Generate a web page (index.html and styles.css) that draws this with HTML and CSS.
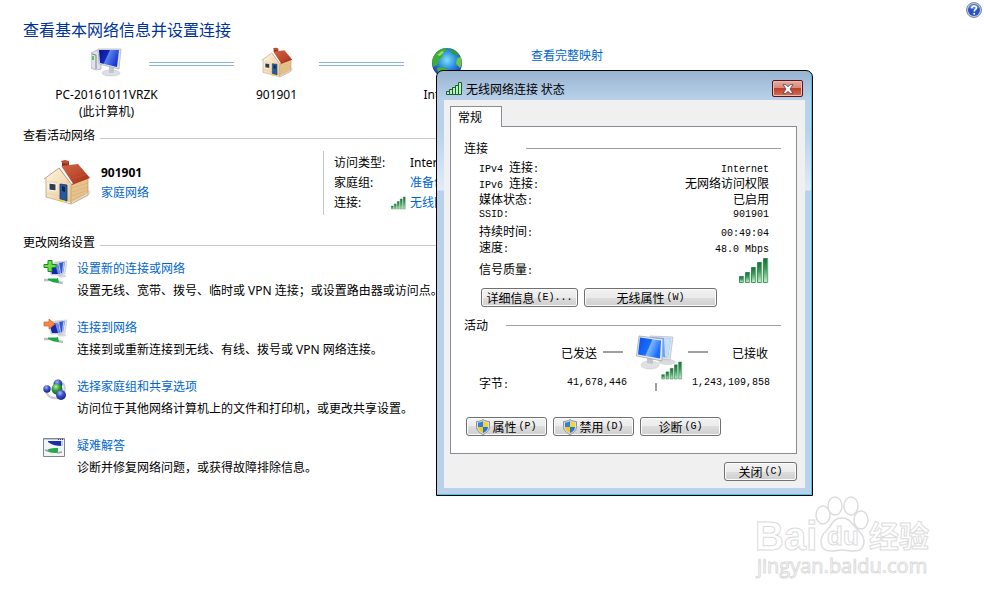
FILE: index.html
```html
<!DOCTYPE html>
<html lang="zh-CN">
<head>
    <meta charset="UTF-8">
    <meta name="viewport" content="width=device-width, initial-scale=1.0">
    <title>网络和共享中心</title>
    <link rel="stylesheet" href="styles.css">
</head>
<body>
    <!-- shared icons -->
    <svg class="sprite" width="0" height="0" aria-hidden="true">
        <defs>
            <linearGradient id="roof" x1="0" y1="0" x2="1" y2="1">
                <stop offset="0" stop-color="#d8694a"/>
                <stop offset="1" stop-color="#a22c12"/>
            </linearGradient>
            <linearGradient id="wall" x1="0" y1="0" x2="1" y2="1">
                <stop offset="0" stop-color="#fff6e2"/>
                <stop offset="1" stop-color="#e9c692"/>
            </linearGradient>
            <linearGradient id="screen" x1="0" y1="0" x2="1" y2="0.4">
                <stop offset="0" stop-color="#0a128c"/>
                <stop offset="0.45" stop-color="#1426b8"/>
                <stop offset="0.5" stop-color="#5b86ea"/>
                <stop offset="1" stop-color="#1a35d8"/>
            </linearGradient>
            <linearGradient id="bright" x1="0" y1="0" x2="1" y2="0.4">
                <stop offset="0" stop-color="#0a50e8"/>
                <stop offset="0.55" stop-color="#1a6cff"/>
                <stop offset="0.6" stop-color="#7fb8ff"/>
                <stop offset="1" stop-color="#1a6cff"/>
            </linearGradient>
            <linearGradient id="bar" x1="0" y1="0" x2="0" y2="1">
                <stop offset="0" stop-color="#1c7038"/>
                <stop offset="0.4" stop-color="#3a9458"/>
                <stop offset="1" stop-color="#c4f2cc"/>
            </linearGradient>
            <radialGradient id="sea" cx="0.5" cy="0.4" r="0.65">
                <stop offset="0" stop-color="#7fe0fa"/>
                <stop offset="0.45" stop-color="#2f8fe0"/>
                <stop offset="1" stop-color="#14259c"/>
            </radialGradient>
            <radialGradient id="blueBall" cx="0.4" cy="0.3" r="0.7">
                <stop offset="0" stop-color="#a9b8f5"/>
                <stop offset="0.5" stop-color="#3a4fc4"/>
                <stop offset="1" stop-color="#1a2580"/>
            </radialGradient>
            <radialGradient id="greenBall" cx="0.4" cy="0.3" r="0.7">
                <stop offset="0" stop-color="#b4f0a8"/>
                <stop offset="0.5" stop-color="#2f9c3a"/>
                <stop offset="1" stop-color="#126020"/>
            </radialGradient>
        </defs>
        <symbol id="house" viewBox="0 0 48 48">
            <path d="M44 30l4 3-3 4-17 9z" fill="#cfcfcf" opacity="0.6"/>
            <path d="M19 4l3-2 4 1v9l-7-1z" fill="#8f3018"/>
            <path d="M18 2l4-1 4 1-1 3-6-1z" fill="#b2543a"/>
            <path d="M3 18L17 9l12 15v20L3 38z" fill="url(#wall)"/>
            <path d="M28 24l17-5v15L28 44z" fill="#e6c38d"/>
            <path d="M29 29l16-5M29 33l16-5M29 37l16-6M29 41l13-6" stroke="#d5ae76" stroke-width="0.7"/>
            <path d="M4 23h10M4 34l24 6M22 23l6 1" stroke="#e2c79b" stroke-width="0.6"/>
            <path d="M18 7l17-2 12 14-18 7z" fill="url(#roof)"/>
            <path d="M22 8l14 0M24 12l14-2M27 16l14-4M28 20l16-5" stroke="#c0563a" stroke-width="0.7"/>
            <path d="M1 19L17 7l12 18" fill="none" stroke="#fff" stroke-width="2.2"/>
            <path d="M1 20L16 9l13 17" fill="none" stroke="#9d7754" stroke-width="0.7"/>
            <path d="M3 19v19l25 7V26M28 45l17-9V20" fill="none" stroke="#b8966a" stroke-width="0.7"/>
            <path d="M6 24l7 1v7l-7-1z" fill="#333c48" stroke="#fff" stroke-width="1"/>
            <path d="M17 25l7 1v16l-7-2z" fill="#245b9e" stroke="#14386c" stroke-width="0.8"/>
            <path d="M19 27l3 1v5l-3-1z" fill="#10254a"/>
            <path d="M16 40l7 2-4 1-3-1z" fill="#eed038"/>
        </symbol>
        <symbol id="signal" viewBox="0 0 30 27">
            <g fill="url(#bar)" stroke="#1f7a40" stroke-width="0.8">
                <path d="M0.5 19.5h4v6h-4z"/>
                <path d="M6.5 15.5h4v10h-4z"/>
                <path d="M12.5 10.5h4v15h-4z"/>
                <path d="M18.5 5.5h4v20h-4z"/>
                <path d="M24.5 1.5h4v24h-4z"/>
            </g>
            <path d="M5 26V20M11 26V16M17 26V11M23 26V6M29 26V2" stroke="#b6dcc0" stroke-width="0.8"/>
        </symbol>
        <symbol id="shield" viewBox="0 0 14 16">
            <path d="M7 0.5c2 1.500 4 2 6.500 2v5c0 4-3 6.500-6.500 8C3.500 14 0.500 11.500 0.500 7.500v-5C3 2.500 5 2 7 0.500z" fill="#d9dde2" stroke="#8b929b"/>
            <path d="M7 2C5.500 3 4 3.500 2 3.600V8h5z" fill="#2b82d9"/>
            <path d="M7 2c1.500 1 3 1.500 5 1.600V8H7z" fill="#f9d331"/>
            <path d="M2 8h5v6C4 12.700 2.200 11 2 8z" fill="#f6c81f"/>
            <path d="M12 8H7v6c3-1.300 4.800-3 5-6z" fill="#2676cf"/>
        </symbol>
        <symbol id="netpc" viewBox="0 0 24 24">
            <ellipse cx="19" cy="16" rx="4" ry="1.500" fill="#d6d8dc"/>
            <path d="M12 2l12-1-2 13-8 1z" fill="#dfe3ea" stroke="#b4bac4" stroke-width="0.5"/>
            <path d="M15 3l7-1-2 11-5 1z" fill="#3454d2"/>
            <path d="M20 3l2-1-2 11h-1z" fill="#a9c2f4"/>
            <path d="M5 3l11 0 2 12-10 0z" fill="#d5dae4" stroke="#a5acba" stroke-width="0.5"/>
            <path d="M6 4l9 0 2 10-8 0z" fill="#1526ac"/>
            <path d="M12 4h3l2 10h-2z" fill="#6d90ec"/>
            <path d="M1 20l5 0M14 22l6 1" stroke="#b9bfc4" stroke-width="2.500"/>
            <path d="M5 18l10 0 1 5c-4 0-8-1-11-3z" fill="#1fa548"/>
            <path d="M5 18.500l9 0" stroke="#7fdc9a"/>
        </symbol>
    </svg>

    <main class="page">
        <header class="page-header">
            <h1 class="page-title">查看基本网络信息并设置连接</h1>
            <button class="help" type="button" aria-label="帮助">
                <svg width="16" height="16" viewBox="0 0 16 16">
                    <circle cx="8" cy="8" r="7.500" fill="#c3c9d8" stroke="#7f8aa5"/>
                    <circle cx="8" cy="8" r="6" fill="#2a52c4"/>
                    <path d="M3 6a5.200 5.200 0 0 1 10 0c-3 1.500-7 1.500-10 0z" fill="#5f86e0"/>
                    <path d="M5.800 6.200c0-3 4.600-2.900 4.600-0.300 0 1.700-2.200 1.700-2.200 3.500" fill="none" stroke="#fff" stroke-width="1.600"/>
                    <circle cx="8.200" cy="11.700" r="1" fill="#fff"/>
                </svg>
            </button>
        </header>

        <section class="network-map">
            <div class="node">
                <svg width="32" height="32" viewBox="0 0 32 32">
                    <path d="M0 6l6-3 4 1v18l-5 1-5-2z" fill="#dfe2e6" stroke="#a6abb3" stroke-width="0.700"/>
                    <path d="M1 7l4 1v14" fill="none" stroke="#80858d"/>
                    <path d="M2 9v4" stroke="#35c135" stroke-width="1.600"/>
                    <ellipse cx="20" cy="26" rx="9" ry="3" fill="#dcdfe3" stroke="#c0c4c9" stroke-width="0.600"/>
                    <path d="M18 19l5 1v6h-5z" fill="#c3c6cc"/>
                    <path d="M7 2l23 0-2 20L8 17z" fill="#dde2e9" stroke="#a9afb8" stroke-width="0.700"/>
                    <path d="M8 3l20 0-2 17L9 16z" fill="url(#screen)"/>
                </svg>
                <span>PC-20161011VRZK</span>
                <span>(此计算机)</span>
            </div>
            <div class="link-line"></div>
            <div class="node">
                <svg width="32" height="32"><use href="#house"/></svg>
                <span>901901</span>
            </div>
            <div class="link-line"></div>
            <div class="node">
                <svg width="32" height="32" viewBox="0 0 32 32">
                    <circle cx="16" cy="16" r="15" fill="url(#sea)"/>
                    <path d="M2 11c2-5 6-9 12-10l2 3-5 2 1 3-4 4-2 5-4 2c-1-4-1-6 0-9z" fill="#3fae30"/>
                    <path d="M6 8l5-4 2 1-4 4z" fill="#93de6a"/>
                    <path d="M19 1.500c4 1 7 3 9 6l-4 1-4-3z" fill="#2f9c38"/>
                    <path d="M30 10c1 4 1 8-1 11l-4-4 1-6z" fill="#6cc545"/>
                    <path d="M6 21l7-1 5 4-3 6.500c-5-1-8-4-9-9z" fill="#46b02f"/>
                </svg>
                <span>Internet</span>
            </div>
            <a class="full-map" href="#">查看完整映射</a>
        </section>

        <h2 class="section-title">查看活动网络</h2>
        <section class="active-network">
            <div class="network-name">
                <svg width="48" height="48"><use href="#house"/></svg>
                <div>
                    <strong>901901</strong>
                    <a href="#">家庭网络</a>
                </div>
            </div>
            <dl class="network-info">
                <dt>访问类型:</dt>
                <dd>Internet</dd>
                <dt>家庭组:</dt>
                <dd><a href="#">准备创建</a></dd>
                <dt>连接:</dt>
                <dd class="with-signal">
                    <svg width="15" height="14"><use href="#signal"/></svg>
                    <a href="#">无线网络连接</a>
                </dd>
            </dl>
        </section>

        <h2 class="section-title">更改网络设置</h2>
        <ul class="tasks">
            <li class="task">
                <svg width="24" height="24" viewBox="0 0 24 24">
                    <use href="#netpc"/>
                    <path d="M5 0.500h4v4h4v3H9v4H5v-4H1v-3h4z" fill="#6fdc50" stroke="#188a1c"/>
                </svg>
                <div>
                    <a href="#">设置新的连接或网络</a>
                    <p>设置无线、宽带、拨号、临时或 VPN 连接；或设置路由器或访问点。</p>
                </div>
            </li>
            <li class="task">
                <svg width="24" height="24" viewBox="0 0 24 24">
                    <use href="#netpc"/>
                    <path d="M1 3h5V0l6 5-6 5V7H1z" fill="#f58a48" stroke="#d2602a" stroke-width="0.700"/>
                </svg>
                <div>
                    <a href="#">连接到网络</a>
                    <p>连接到或重新连接到无线、有线、拨号或 VPN 网络连接。</p>
                </div>
            </li>
            <li class="task">
                <svg width="24" height="24" viewBox="0 0 24 24">
                    <path d="M3 14c3 6 8 7 13 6M20 5c2 3 2 6 1 9" fill="none" stroke="#c6cbd6" stroke-width="2"/>
                    <circle cx="15" cy="6" r="4.500" fill="url(#blueBall)"/>
                    <circle cx="4" cy="11" r="3.700" fill="url(#blueBall)"/>
                    <circle cx="14" cy="11" r="5.500" fill="url(#greenBall)"/>
                    <circle cx="18" cy="17" r="5" fill="url(#blueBall)"/>
                </svg>
                <div>
                    <a href="#">选择家庭组和共享选项</a>
                    <p>访问位于其他网络计算机上的文件和打印机，或更改共享设置。</p>
                </div>
            </li>
            <li class="task">
                <svg width="24" height="24" viewBox="0 0 24 24">
                    <path d="M0.500 1.500h21v18h-21z" fill="#f1f3f5" stroke="#7e858e"/>
                    <path d="M1 2.500h20" stroke="#c3c9d2"/>
                    <path d="M15 2.500h1m1 0h1m1 0h1" stroke="#444"/>
                    <path d="M5 4h14v5c-5 0-10-1-14-4z" fill="#1b2fa6"/>
                    <path d="M19 4v5" stroke="#bcd0f0" stroke-width="2"/>
                    <path d="M4 13c4-2 7-2 11-2v5c-4 0-8 0-11-2z" fill="#27a84b"/>
                    <path d="M2 13l3 1M14 16l5-1" stroke="#9aa2aa" stroke-width="1.500"/>
                </svg>
                <div>
                    <a href="#">疑难解答</a>
                    <p>诊断并修复网络问题，或获得故障排除信息。</p>
                </div>
            </li>
        </ul>
    </main>

    <div class="dialog" role="dialog" aria-labelledby="dialogTitle">
        <div class="title-bar">
            <svg width="16" height="13" viewBox="0 0 16 13">
                <path d="M0.500 9.500h3v3h-3zM3.500 7.500h3v5h-3zM6.500 5.500h3v7h-3zM9.500 3.500h3v9h-3zM12.500 0.500h3v12h-3z" fill="#b4f5b8" stroke="#1d5c33"/>
            </svg>
            <span class="dialog-title" id="dialogTitle">无线网络连接 状态</span>
            <button class="close-x" type="button" aria-label="关闭">
                <svg width="12" height="10" viewBox="0 0 12 10">
                    <path d="M1 0.700h3l2 2 2-2h3L8 5l3 4.300H8l-2-2-2 2H1L4 5z" fill="#fff" stroke="#5b4a52" stroke-width="0.900"/>
                </svg>
            </button>
        </div>
        <div class="dialog-body">
            <div role="tablist">
                <button class="tab" type="button" role="tab" aria-selected="true">常规</button>
            </div>
            <div class="panel" role="tabpanel">
                <h3 class="group-title connection-title">连接</h3>
                <dl class="details">
                    <div><dt><span class="en">IPv4 </span>连接<span class="en">:</span></dt><dd class="en">Internet</dd></div>
                    <div><dt><span class="en">IPv6 </span>连接<span class="en">:</span></dt><dd>无网络访问权限</dd></div>
                    <div><dt>媒体状态<span class="en">:</span></dt><dd>已启用</dd></div>
                    <div><dt class="en">SSID:</dt><dd class="en">901901</dd></div>
                    <div><dt>持续时间<span class="en">:</span></dt><dd class="en">00:49:04</dd></div>
                    <div><dt>速度<span class="en">:</span></dt><dd class="en">48.0 Mbps</dd></div>
                    <div class="quality">
                        <dt>信号质量<span class="en">:</span></dt>
                        <dd><svg width="30" height="27"><use href="#signal"/></svg></dd>
                    </div>
                </dl>
                <div class="buttons detail-buttons">
                    <button class="btn" type="button">详细信息<span class="en">(E)...</span></button>
                    <button class="btn btn-wide" type="button">无线属性<span class="en">(W)</span></button>
                </div>

                <h3 class="group-title activity-title">活动</h3>
                <div class="activity">
                    <div class="sent">已发送<i class="dash"></i></div>
                    <div class="activity-icon">
                        <svg width="48" height="46" viewBox="0 0 48 46">
                            <ellipse cx="31" cy="27" rx="9" ry="3" fill="#d9dbde"/>
                            <path d="M14 1l23 1-3 23-16-2z" fill="#e3e5e9" stroke="#bbbec4" stroke-width="0.800"/>
                            <path d="M16 2l19 1.500-3 19-14-1z" fill="#5fa4ff"/>
                            <path d="M28 3l7 0.500-3 19-3-1z" fill="#c4deff"/>
                            <ellipse cx="14" cy="30" rx="9" ry="4" fill="#dfe1e4" stroke="#c8cace" stroke-width="0.600"/>
                            <path d="M11 22l6 1v6l-6-1z" fill="#c2c5ca"/>
                            <path d="M3 1l24 3-1 22L0.500 21z" fill="#e6e8eb" stroke="#a0a5ad" stroke-width="0.800"/>
                            <path d="M4 2.500l21 3-1 18L2 19.500z" fill="url(#bright)"/>
                            <svg x="25" y="26" width="22" height="19"><use href="#signal"/></svg>
                        </svg>
                        <i class="tick"></i>
                    </div>
                    <div class="received"><i class="dash"></i>已接收</div>
                    <div class="bytes"><span>字节<span class="en">:</span></span><span class="en">41,678,446</span></div>
                    <div class="bytes-received en">1,243,109,858</div>
                </div>
                <div class="buttons">
                    <button class="btn btn-action" type="button"><svg width="14" height="16"><use href="#shield"/></svg>属性<span class="en">(P)</span></button>
                    <button class="btn btn-action" type="button"><svg width="14" height="16"><use href="#shield"/></svg>禁用<span class="en">(D)</span></button>
                    <button class="btn btn-action" type="button">诊断<span class="en">(G)</span></button>
                </div>
            </div>
            <div class="dialog-footer">
                <button class="btn btn-close" type="button">关闭<span class="en">(C)</span></button>
            </div>
        </div>
    </div>

    <svg class="watermark" width="180" height="90" viewBox="0 0 180 90">
        <g fill="#fff" stroke="#dcdcdc" stroke-width="1.500">
            <ellipse cx="69" cy="19" rx="7" ry="9"/>
            <ellipse cx="81" cy="10" rx="7" ry="9"/>
            <ellipse cx="97" cy="10" rx="7" ry="9"/>
            <ellipse cx="107" cy="24" rx="7" ry="9"/>
            <path d="M88 22c-9 0-10 7-15 12-9 8-8 21 4 21 5 0 7-1 11-1s7 1 12 1c12 0 13-13 4-21-6-5-7-12-16-12z"/>
        </g>
        <g class="watermark-text">
            <text class="wm-bai" x="1" y="54">Bai</text>
            <text class="wm-du" x="73" y="49">du</text>
            <text class="wm-cn" x="115" y="51">经验</text>
            <text class="wm-url" x="3" y="77">jingyan.baidu.com</text>
        </g>
    </svg>
</body>
</html>
```

FILE: styles.css
```css
* {
    box-sizing: border-box;
}

body {
    margin: 0;
    background: #fff;
    color: #000;
    font-family: "Noto Sans", "Noto Sans CJK SC", sans-serif;
    font-size: 12px;
}

h1, h2, h3, p, dl, dd, ul {
    margin: 0;
    padding: 0;
}

a {
    color: #0066cc;
    text-decoration: none;
}

a:hover {
    text-decoration: underline;
}

button {
    font-family: inherit;
    font-size: 12px;
    color: #000;
    cursor: pointer;
}

svg {
    display: block;
    flex-shrink: 0;
}

.sprite {
    position: absolute;
}

/* main page */
.page-header {
    display: flex;
    justify-content: space-between;
    align-items: flex-start;
    padding: 2px 2px 0 23px;
}

.page-title {
    margin-top: 16px;
    font-size: 16px;
    line-height: 24px;
    font-weight: normal;
    color: #003399;
}

.help {
    padding: 0;
    border: none;
    background: none;
}

.network-map {
    display: flex;
    align-items: flex-start;
    padding: 5px 0 0 64px;
}

.node {
    display: flex;
    flex-direction: column;
    align-items: center;
    width: 85px;
    line-height: 17px;
    white-space: nowrap;
}

.node svg {
    margin-bottom: 7px;
}

.link-line {
    width: 85px;
    height: 4px;
    margin-top: 15px;
    border-top: 1px solid #8fb1d6;
    border-bottom: 1px solid #8fb1d6;
}

.full-map {
    margin-left: 42px;
    line-height: 18px;
}

.section-title {
    display: flex;
    align-items: center;
    gap: 5px;
    width: 75%;
    margin: 8px 0 0 23px;
    font-size: 12px;
    line-height: 16px;
    font-weight: normal;
}

.section-title::after {
    content: "";
    flex: 1;
    height: 1px;
    margin-top: 4px;
    background: #c8c8c8;
}

.active-network {
    display: flex;
    margin: 7px 0 20px 43px;
}

.network-name {
    display: flex;
    align-items: center;
    gap: 10px;
    width: 280px;
}

.network-name div {
    display: flex;
    flex-direction: column;
    line-height: 20px;
}

.network-info {
    display: grid;
    grid-template-columns: 76px 1fr;
    padding: 2px 0 2px 10px;
    border-left: 1px solid #c8c8c8;
    line-height: 20px;
    white-space: nowrap;
}

.with-signal {
    display: flex;
    align-items: center;
    gap: 4px;
    margin-left: -19px;
}

.tasks {
    margin: 7px 0 0 43px;
    list-style: none;
}

.task {
    display: flex;
    gap: 10px;
    margin-bottom: 15px;
    line-height: 22px;
}

.task svg {
    margin-top: 2px;
}

/* status dialog */
.dialog {
    position: absolute;
    top: 70px;
    left: 436px;
    width: 377px;
    padding: 0 7px 7px;
    border: 1px solid #000;
    border-radius: 7px 7px 0 0;
    background: linear-gradient(#99b4d1 0, #b9d1ea 29px, #b9d1ea 60px, #dfebf8 119px, #b9d1ea 120px);
    box-shadow: inset -1px -1px 0 #35cdea;
    font-family: "Noto Sans CJK SC", sans-serif;
}

/* half-width characters */
.en {
    font-family: "Liberation Mono", monospace;
    font-size: 10px;
    white-space: pre;
}

.title-bar {
    display: flex;
    align-items: center;
    gap: 4px;
    height: 29px;
    padding: 6px 2px 0;
}

.dialog-title {
    flex: 1;
}

.close-x {
    display: flex;
    align-items: center;
    justify-content: center;
    width: 31px;
    height: 17px;
    padding: 0;
    border: 1px solid #57141c;
    border-radius: 2px;
    background: linear-gradient(#e9aa9c 0, #d98a7c 45%, #bd4127 50%, #d2705a 100%);
    box-shadow: inset 0 0 0 1px #eebbb0;
}

.dialog-body {
    padding: 6px 8px 7px 6px;
    background: #f0f0f0;
}

.tab {
    display: block;
    position: relative;
    width: 52px;
    height: 21px;
    padding: 0 0 2px 7px;
    border: 1px solid #898c95;
    border-bottom: none;
    background: #fff;
    text-align: left;
}

.panel {
    margin-top: -1px;
    padding: 13px 15px 17px 13px;
    border: 1px solid #898c95;
    background: #fff;
}

.group-title {
    display: flex;
    align-items: center;
    font-size: 12px;
    line-height: 16px;
    font-weight: normal;
}

.group-title::after {
    content: "";
    flex: 1;
    height: 1px;
    background: #a0a0a0;
}

.connection-title {
    gap: 38px;
}

.activity-title {
    gap: 18px;
    margin-top: 10px;
}

.details {
    padding: 3px 12px 0 15px;
    line-height: 16px;
}

.details div {
    display: flex;
    justify-content: space-between;
    align-items: baseline;
    height: 16px;
}

.details .quality {
    align-items: center;
    height: 27px;
    margin-top: 2px;
}

.buttons {
    display: flex;
    gap: 6px;
    padding-left: 2px;
}

.detail-buttons {
    margin-top: 4px;
    padding-left: 17px;
}

.btn {
    display: flex;
    align-items: center;
    justify-content: center;
    width: 97px;
    height: 19px;
    padding: 0;
    border: 1px solid #707070;
    border-radius: 3px;
    background: linear-gradient(#f2f2f2 0, #ebebeb 50%, #dddddd 50%, #cfcfcf 100%);
    box-shadow: inset 0 0 0 1px #fcfcfc;
    line-height: 16px;
    white-space: nowrap;
}

.btn-wide {
    width: 133px;
}

.btn-action {
    width: 81px;
}

.btn-close {
    width: 73px;
}

.btn svg {
    margin-right: 2px;
}

.btn .en {
    margin-left: 2px;
}

.activity {
    display: grid;
    grid-template-columns: 148px 58px 1fr;
    grid-template-rows: 34px 27px;
    align-items: center;
    margin-bottom: 21px;
    padding: 2px 11px 0 15px;
}

.sent {
    display: flex;
    align-items: center;
    justify-content: flex-end;
    gap: 6px;
    padding-right: 4px;
}

.received {
    display: flex;
    align-items: center;
    justify-content: space-between;
    padding: 0 2px 0 3px;
}

.activity-icon {
    grid-row: 1 / 3;
    grid-column: 2;
    align-self: start;
    display: flex;
    flex-direction: column;
    align-items: center;
    gap: 2px;
}

.activity-icon > svg {
    margin-left: 8px;
}

.dash {
    width: 20px;
    height: 2px;
    background: #a0a0a0;
}

.tick {
    width: 2px;
    height: 8px;
    background: #a0a0a0;
}

.bytes {
    display: flex;
    align-items: center;
    justify-content: space-between;
}

.bytes-received {
    text-align: right;
}

.dialog-footer {
    display: flex;
    justify-content: flex-end;
    margin-top: 8px;
}

/* watermark over the bottom corner */
.watermark {
    position: absolute;
    right: 50px;
    bottom: 16px;
}

.watermark-text {
    fill: #fff;
    stroke: #dcdcdc;
    stroke-width: 1px;
    font-family: "Liberation Sans", sans-serif;
    font-weight: bold;
}

.wm-bai {
    font-size: 40px;
}

.wm-du {
    font-size: 26px;
}

.wm-cn {
    font-family: "Noto Sans CJK SC", sans-serif;
    font-size: 30px;
}

.wm-url {
    font-family: "Open Sans", sans-serif;
    font-size: 20px;
    font-weight: normal;
}
```
